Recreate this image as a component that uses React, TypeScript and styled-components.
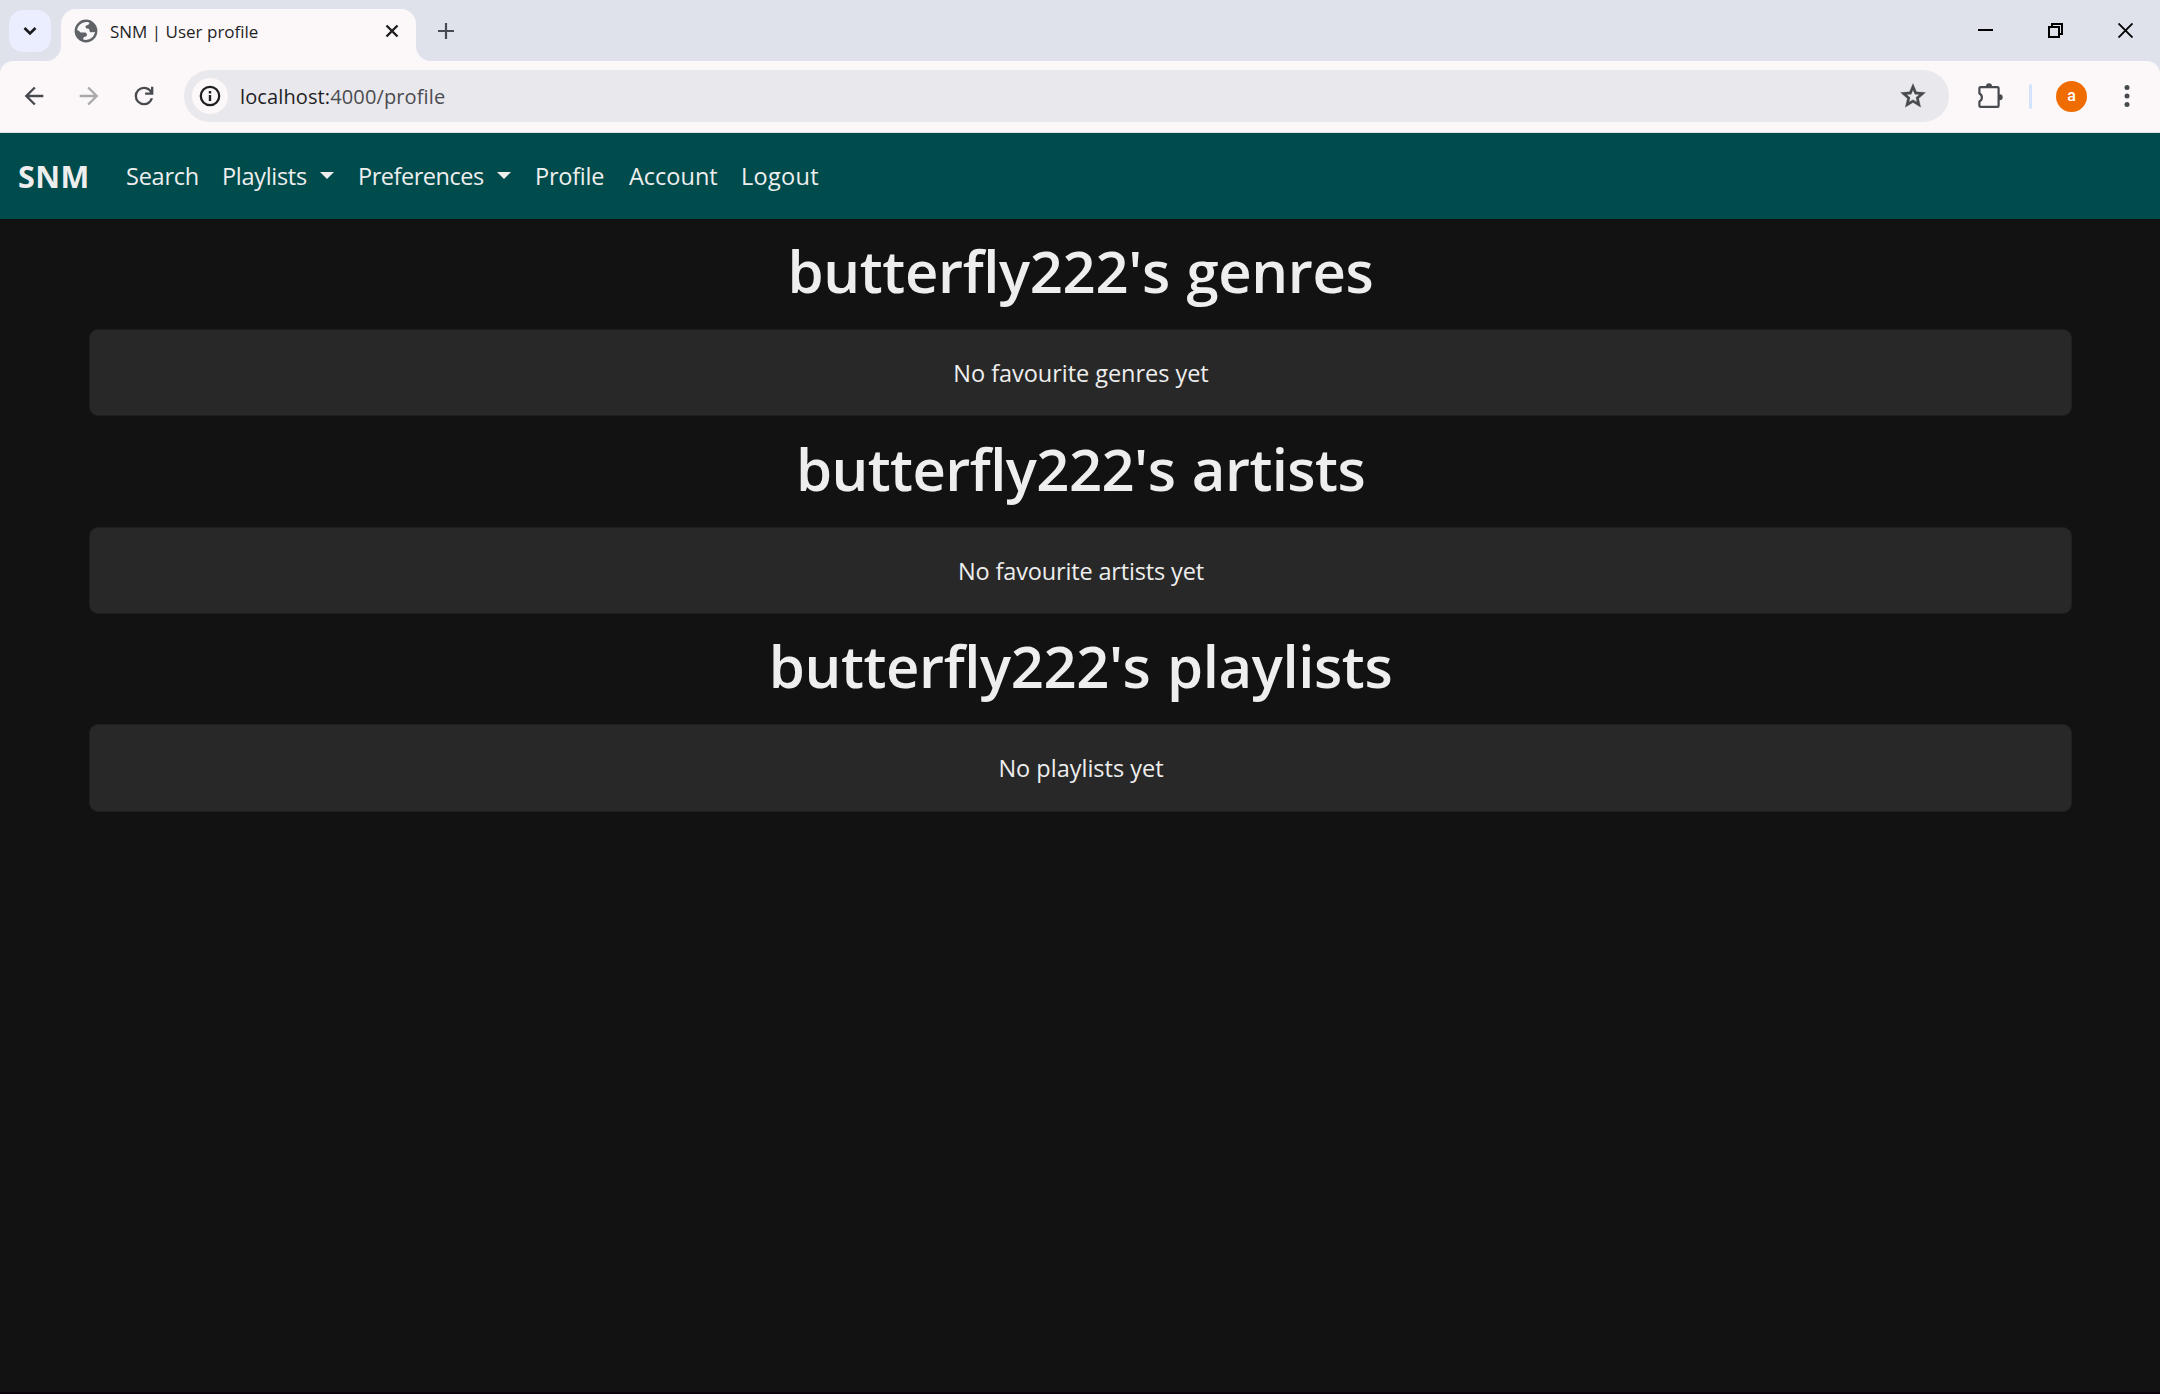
import React from 'react';
import styled, { createGlobalStyle } from 'styled-components';

const GlobalStyle = createGlobalStyle`
  html, body { margin: 0; padding: 0; background: #121212; }
  * { box-sizing: border-box; }
  body { font-family: 'Open Sans', 'Noto Sans', 'Liberation Sans', sans-serif; }
`;

const Window = styled.div`
  width: 2160px;
  height: 1394px;
  display: flex;
  flex-direction: column;
  overflow: hidden;
  background: #121212;
  border-bottom: 2px solid #0a040a;
`;

/* ---------- browser chrome ---------- */
const TitleBar = styled.div`
  height: 61px;
  flex: none;
  display: flex;
  align-items: flex-start;
  padding: 9px 0 0 9px;
  background: #dfe2eb;
`;

const TabSearch = styled.button`
  width: 42px;
  height: 42px;
  margin: 1px 10px 0 0;
  padding: 0;
  border: 0;
  border-radius: 14px;
  background: #eaeeff;
  display: flex;
  align-items: center;
  justify-content: center;
`;

const Tab = styled.div`
  position: relative;
  width: 355px;
  height: 52px;
  display: flex;
  align-items: center;
  padding: 0 17px 9px 12.5px;
  border-radius: 15px 15px 0 0;
  background: #fcf8f9;

  &::before,
  &::after {
    content: '';
    position: absolute;
    bottom: 0;
    width: 15px;
    height: 15px;
  }
  &::before {
    left: -15px;
    background: radial-gradient(circle at 0 0, transparent 14.5px, #fcf8f9 15.5px);
  }
  &::after {
    right: -15px;
    background: radial-gradient(circle at 100% 0, transparent 14.5px, #fcf8f9 15.5px);
  }
`;

const TabTitle = styled.span`
  flex: 1;
  padding: 2px 0 0 12.5px;
  font-size: 17px;
  line-height: 24px;
  color: #1f1f1f;
  white-space: nowrap;
`;

const NewTab = styled.button`
  width: 42px;
  height: 42px;
  margin: 1px 0 0 9px;
  padding: 0;
  border: 0;
  background: none;
  display: flex;
  align-items: center;
  justify-content: center;
`;

const WindowControls = styled.div`
  margin: -9px 0 0 auto;
  height: 61px;
  display: flex;
`;

const WindowButton = styled.button`
  width: 70px;
  height: 61px;
  padding: 0;
  border: 0;
  background: none;
  display: flex;
  align-items: center;
  justify-content: center;
`;

const ToolbarBack = styled.div`
  flex: none;
  height: 72px;
  background: #dfe2eb;
`;

const Toolbar = styled.div`
  height: 72px;
  display: flex;
  align-items: center;
  padding: 0 0 1px 6px;
  border-bottom: 1px solid #e0dfe3;
  border-radius: 13px 13px 0 0;
  background: #fcf8f9;
`;

const ToolButton = styled.button<{ $w?: number }>`
  width: ${p => p.$w ?? 55}px;
  height: 48px;
  flex: none;
  padding: 0;
  border: 0;
  background: none;
  display: flex;
  align-items: center;
  justify-content: center;
`;

const AddressBar = styled.div`
  width: 1765px;
  height: 52px;
  flex: none;
  margin-left: 13px;
  display: flex;
  align-items: center;
  padding: 0 16px 0 8px;
  border-radius: 26px;
  background: #e9e8ed;
`;

const SiteInfo = styled.div`
  width: 36px;
  height: 36px;
  border-radius: 50%;
  background: #fcf8f9;
  display: flex;
  align-items: center;
  justify-content: center;
`;

const Url = styled.span`
  flex: 1;
  padding: 1px 0 0 12px;
  font-size: 20px;
  line-height: 28px;
  letter-spacing: 0.12px;
  color: #1f1f1f;
`;

const UrlPath = styled.span`
  color: #4b4c50;
`;

const StarSlot = styled.span`
  display: flex;
  width: 40px;
  justify-content: center;
`;

const Divider = styled.span`
  flex: none;
  width: 3px;
  height: 25px;
  margin: 0 24px 0 -4px;
  border-radius: 1.5px;
  background: #d3e3fd;
`;

const Avatar = styled.span`
  flex: none;
  width: 31px;
  height: 31px;
  margin-right: 6px;
  border-radius: 50%;
  background: #ef6c00;
  color: #fff;
  font: 500 16px/29px Roboto, sans-serif;
  text-align: center;
`;

/* ---------- site ---------- */
const Navbar = styled.nav`
  height: 86px;
  flex: none;
  display: flex;
  align-items: center;
  padding-left: 18px;
  background: #004b4c;
  color: #eee;
`;

const Brand = styled.a`
  width: 108px;
  font-size: 30.5px;
  font-weight: 700;
  letter-spacing: 0.4px;
  line-height: 46px;
`;

const NavLink = styled.a<{ $w: number; $ls: number }>`
  width: ${p => p.$w}px;
  display: flex;
  align-items: center;
  font-size: 23.5px;
  line-height: 36px;
  letter-spacing: ${p => p.$ls}px;
`;

const Caret = styled.span`
  margin: -1px 24px 0 auto;
  border-top: 7px solid #eee;
  border-left: 7px solid transparent;
  border-right: 7px solid transparent;
`;

const Main = styled.main`
  display: flex;
  flex-direction: column;
  padding: 0 88px 0 89px;
  color: #eee;
  text-align: center;
`;

const Section = styled.section`
  height: 197.7px;
`;

const Heading = styled.h1<{ $ls: number }>`
  height: 110px;
  margin: 0;
  font-size: 58px;
  font-weight: 600;
  line-height: 103px;
  letter-spacing: ${p => p.$ls}px;
  word-spacing: 2px;
`;

const Card = styled.div<{ $ls: number }>`
  height: 87.3px;
  padding-left: 1px;
  border: 1px solid #1f1f1f;
  border-radius: 9px;
  background: #282828;
  font-size: 23.5px;
  line-height: 86px;
  letter-spacing: ${p => p.$ls}px;
`;

const links = [
  { label: 'Search', w: 96, ls: -0.25 },
  { label: 'Playlists', w: 136, ls: -0.3 },
  { label: 'Preferences', w: 177, ls: -0.47 },
  { label: 'Profile', w: 94, ls: -0.25 },
  { label: 'Account', w: 112, ls: 0 },
  { label: 'Logout', w: 100, ls: 0.3 },
];

const menus = ['Playlists', 'Preferences'];

const sections = [
  { title: "butterfly222's genres", ls: -0.36, empty: 'No favourite genres yet', els: -0.04 },
  { title: "butterfly222's artists", ls: -0.56, empty: 'No favourite artists yet', els: -0.15 },
  { title: "butterfly222's playlists", ls: -0.4, empty: 'No playlists yet', els: 0 },
];

const Globe = () => (
  <svg width="24" height="24" viewBox="0 0 24 24">
    <circle cx="12" cy="12" r="11.4" fill="#5f6368" />
    <path
      fill="#fcf8f9"
      d="M3.2 11.2C3.5 7 7.4 3.2 12.5 3.1c1.4 0 2.2.3 2.9.6-.2 1.6-1.1 2.2-2.5 2.6-1 .3-1.4.9-1.3 1.9.1.9.7 1.4 1.8 1.4 1.6 0 1.9.9 2.1 2.2.2 1.2 1 1.6 2.2 1.5 1.3-.1 2.5-.5 3.2-.2-.6 4.4-4.2 7.7-8.8 7.8-1.1 0-2-.2-2.9-.5 0-1.6.4-2.5 1.8-2.7 1.5-.2 2.1-.9 1.9-2.3-.2-1.3-1.1-1.9-2.5-1.9H7.2c-1-.1-1.3-.9-2.1-1.6-.5-.5-1.2-.7-1.9-.7z"
    />
  </svg>
);

const Puzzle = () => (
  <svg width="30" height="30" viewBox="0 0 30 30" fill="none" stroke="#474a4f" strokeWidth="2.2">
    <path d="M4.6 6.1H21.4a1.2 1.2 0 0 1 1.2 1.2V24.7a1.2 1.2 0 0 1-1.2 1.2H4.6a1.2 1.2 0 0 1-1.2-1.2V20.4a4.3 4.3 0 0 0 0-7.8V7.3a1.2 1.2 0 0 1 1.2-1.2z" strokeLinejoin="round" />
    <path d="M10 6V5.3a3 3 0 0 1 6 0V6zM23 13.3h.7a3 3 0 0 1 0 6H23z" fill="#474a4f" stroke="none" />
  </svg>
);

export default function App() {
  return (
    <Window>
      <GlobalStyle />
      <TitleBar>
        <TabSearch>
          <svg width="14" height="10" viewBox="0 0 14 10" fill="none" stroke="#1b1b1f" strokeWidth="2.7">
            <path d="M1.5 2 7 7.4 12.5 2" />
          </svg>
        </TabSearch>
        <Tab>
          <Globe />
          <TabTitle>SNM | User profile</TabTitle>
          <svg width="14" height="14" viewBox="0 0 14 14" fill="none" stroke="#1f1f1f" strokeWidth="2.4">
            <path d="M1.5 1.5l11 11M12.5 1.5l-11 11" />
          </svg>
        </Tab>
        <NewTab>
          <svg width="16" height="16" viewBox="0 0 16 16" stroke="#474a4f" strokeWidth="2.2">
            <path d="M8 0v16M0 8h16" />
          </svg>
        </NewTab>
        <WindowControls>
          <WindowButton>
            <svg width="15" height="15" viewBox="0 0 15 15"><path d="M0 6h15v2H0z" /></svg>
          </WindowButton>
          <WindowButton>
            <svg width="15" height="15" viewBox="0 0 15 15" fill="none" stroke="#000" strokeWidth="2">
              <path d="M1 4h10v10H1zM4 4V1h10v10h-3" />
            </svg>
          </WindowButton>
          <WindowButton>
            <svg width="15" height="15" viewBox="0 0 15 15" fill="none" stroke="#000" strokeWidth="1.9">
              <path d="M.5.5l14 14M14.500.5l-14 14" />
            </svg>
          </WindowButton>
        </WindowControls>
      </TitleBar>

      <ToolbarBack>
        <Toolbar>
          <ToolButton>
            <svg width="28" height="28" viewBox="0 0 24 24" fill="#474a4f">
              <path d="M7.825 13l5.6 5.6L12 20l-8-8 8-8 1.425 1.4-5.6 5.6H20v2z" />
            </svg>
          </ToolButton>
          <ToolButton>
            <svg width="28" height="28" viewBox="0 0 24 24" fill="#a9a8ab">
              <path d="M16.175 13l-5.6 5.6L12 20l8-8-8-8-1.425 1.4 5.6 5.6H4v2z" />
            </svg>
          </ToolButton>
          <ToolButton>
            <svg width="28" height="28" viewBox="0 0 24 24" fill="#474a4f">
              <path d="M12 20q-3.35 0-5.675-2.325T4 12t2.325-5.675T12 4q1.725 0 3.3.713T18 6.75V4h2v7h-7V9h4.2q-.8-1.4-2.187-2.2T12 6Q9.5 6 7.75 7.75T6 12t1.75 4.25T12 18q1.925 0 3.475-1.1T17.65 14h2.1q-.7 2.65-2.85 4.325T12 20" />
            </svg>
          </ToolButton>
          <AddressBar>
            <SiteInfo>
              <svg width="22" height="22" viewBox="0 0 22 22" fill="#1f1f1f">
                <circle cx="11" cy="11" r="9.2" fill="none" stroke="#1f1f1f" strokeWidth="2.3" />
                <path d="M9.8 6h2.4v2.4H9.8zM9.8 9.9h2.4v6.2H9.8z" />
              </svg>
            </SiteInfo>
            <Url>
              localhost:<UrlPath>4000/profile</UrlPath>
            </Url>
            <StarSlot>
              <svg width="30" height="30" viewBox="0 0 24 24" fill="#474a4f" stroke="#474a4f" strokeWidth="0.2">
                <path d="M8.85 16.825l3.15-1.9 3.15 1.925-.825-3.6 2.775-2.4-3.65-.325L12 7.15l-1.45 3.35-3.65.325 2.775 2.425zM5.825 21l1.625-7.025L2 9.25l7.2-.625L12 2l2.8 6.625 7.2.625-5.45 4.725L18.175 21 12 17.275z" />
              </svg>
            </StarSlot>
          </AddressBar>
          <ToolButton $w={84}>
            <Puzzle />
          </ToolButton>
          <Divider />
          <Avatar>a</Avatar>
          <ToolButton $w={67}>
            <svg width="6" height="24" viewBox="0 0 6 24" fill="#474a4f">
              <circle cx="3" cy="3.5" r="2.5" />
              <circle cx="3" cy="12" r="2.5" />
              <circle cx="3" cy="20.5" r="2.5" />
            </svg>
          </ToolButton>
        </Toolbar>
      </ToolbarBack>

      <Navbar>
        <Brand>SNM</Brand>
        {links.map(l => (
          <NavLink key={l.label} $w={l.w} $ls={l.ls}>
            {l.label}
            {menus.includes(l.label) && <Caret />}
          </NavLink>
        ))}
      </Navbar>

      <Main>
        {sections.map(s => (
          <Section key={s.title}>
            <Heading $ls={s.ls}>{s.title}</Heading>
            <Card $ls={s.els}>{s.empty}</Card>
          </Section>
        ))}
      </Main>
    </Window>
  );
}
